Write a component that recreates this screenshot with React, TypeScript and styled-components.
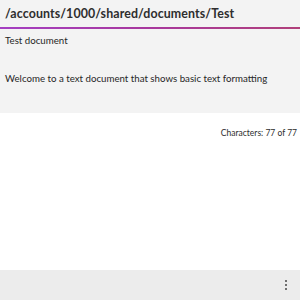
import React from "react";
import styled, { createGlobalStyle } from "styled-components";

const Global = createGlobalStyle`
  html, body { margin: 0; padding: 0; width: 300px; height: 300px; overflow: hidden; background: #ffffff; }
  #root { width: 300px; height: 300px; }
`;

const Screen = styled.div`
  width: 300px;
  height: 300px;
  display: flex;
  flex-direction: column;
  font-family: Lato, "Noto Sans", sans-serif;
  color: #262626;
`;

const TitleBar = styled.div`
  height: 27px;
  box-sizing: border-box;
  background: #f3f3f3;
  display: flex;
  align-items: center;
  padding: 0 5px 1px;
  font-size: 12.4px;
  font-weight: 700;
  color: #2e2e2e;
  letter-spacing: 0.1px;
  white-space: nowrap;
`;

const Accent = styled.div`
  height: 2px;
  background: linear-gradient(90deg, #a43fc2 0%, #a8389d 50%, #b0407a 100%);
`;

const Editor = styled.div`
  background: #f3f3f3;
  height: 84px;
  padding: 4px 5px 0;
  box-sizing: border-box;
  font-size: 9.7px;
  display: flex;
  flex-direction: column;
`;

const Line = styled.div<{ $gap?: number }>`
  margin-top: ${(p) => p.$gap ?? 0}px;
  line-height: 14px;
  white-space: nowrap;
`;

const Body = styled.div`
  flex: 1;
  background: #ffffff;
  padding: 15px 3px 0;
  display: flex;
  justify-content: flex-end;
  align-items: flex-start;
`;

const Count = styled.div`
  font-size: 8.5px;
  color: #2d2d2d;
`;

const Footer = styled.div`
  height: 30px;
  background: #ececec;
  display: flex;
  justify-content: flex-end;
  align-items: center;
  padding-right: 13px;
`;

const Dots = styled.div`
  display: flex;
  flex-direction: column;
  gap: 2px;
`;

const Dot = styled.span`
  width: 2px;
  height: 2px;
  background: #707070;
`;

export default function App() {
  return (
    <>
      <Global />
      <Screen>
        <TitleBar>/accounts/1000/shared/documents/Test</TitleBar>
        <Accent />
        <Editor>
          <Line>Test document</Line>
          <Line $gap={24}>Welcome to a text document that shows basic text formatting</Line>
        </Editor>
        <Body>
          <Count>Characters: 77 of 77</Count>
        </Body>
        <Footer>
          <Dots>
            <Dot />
            <Dot />
            <Dot />
          </Dots>
        </Footer>
      </Screen>
    </>
  );
}
